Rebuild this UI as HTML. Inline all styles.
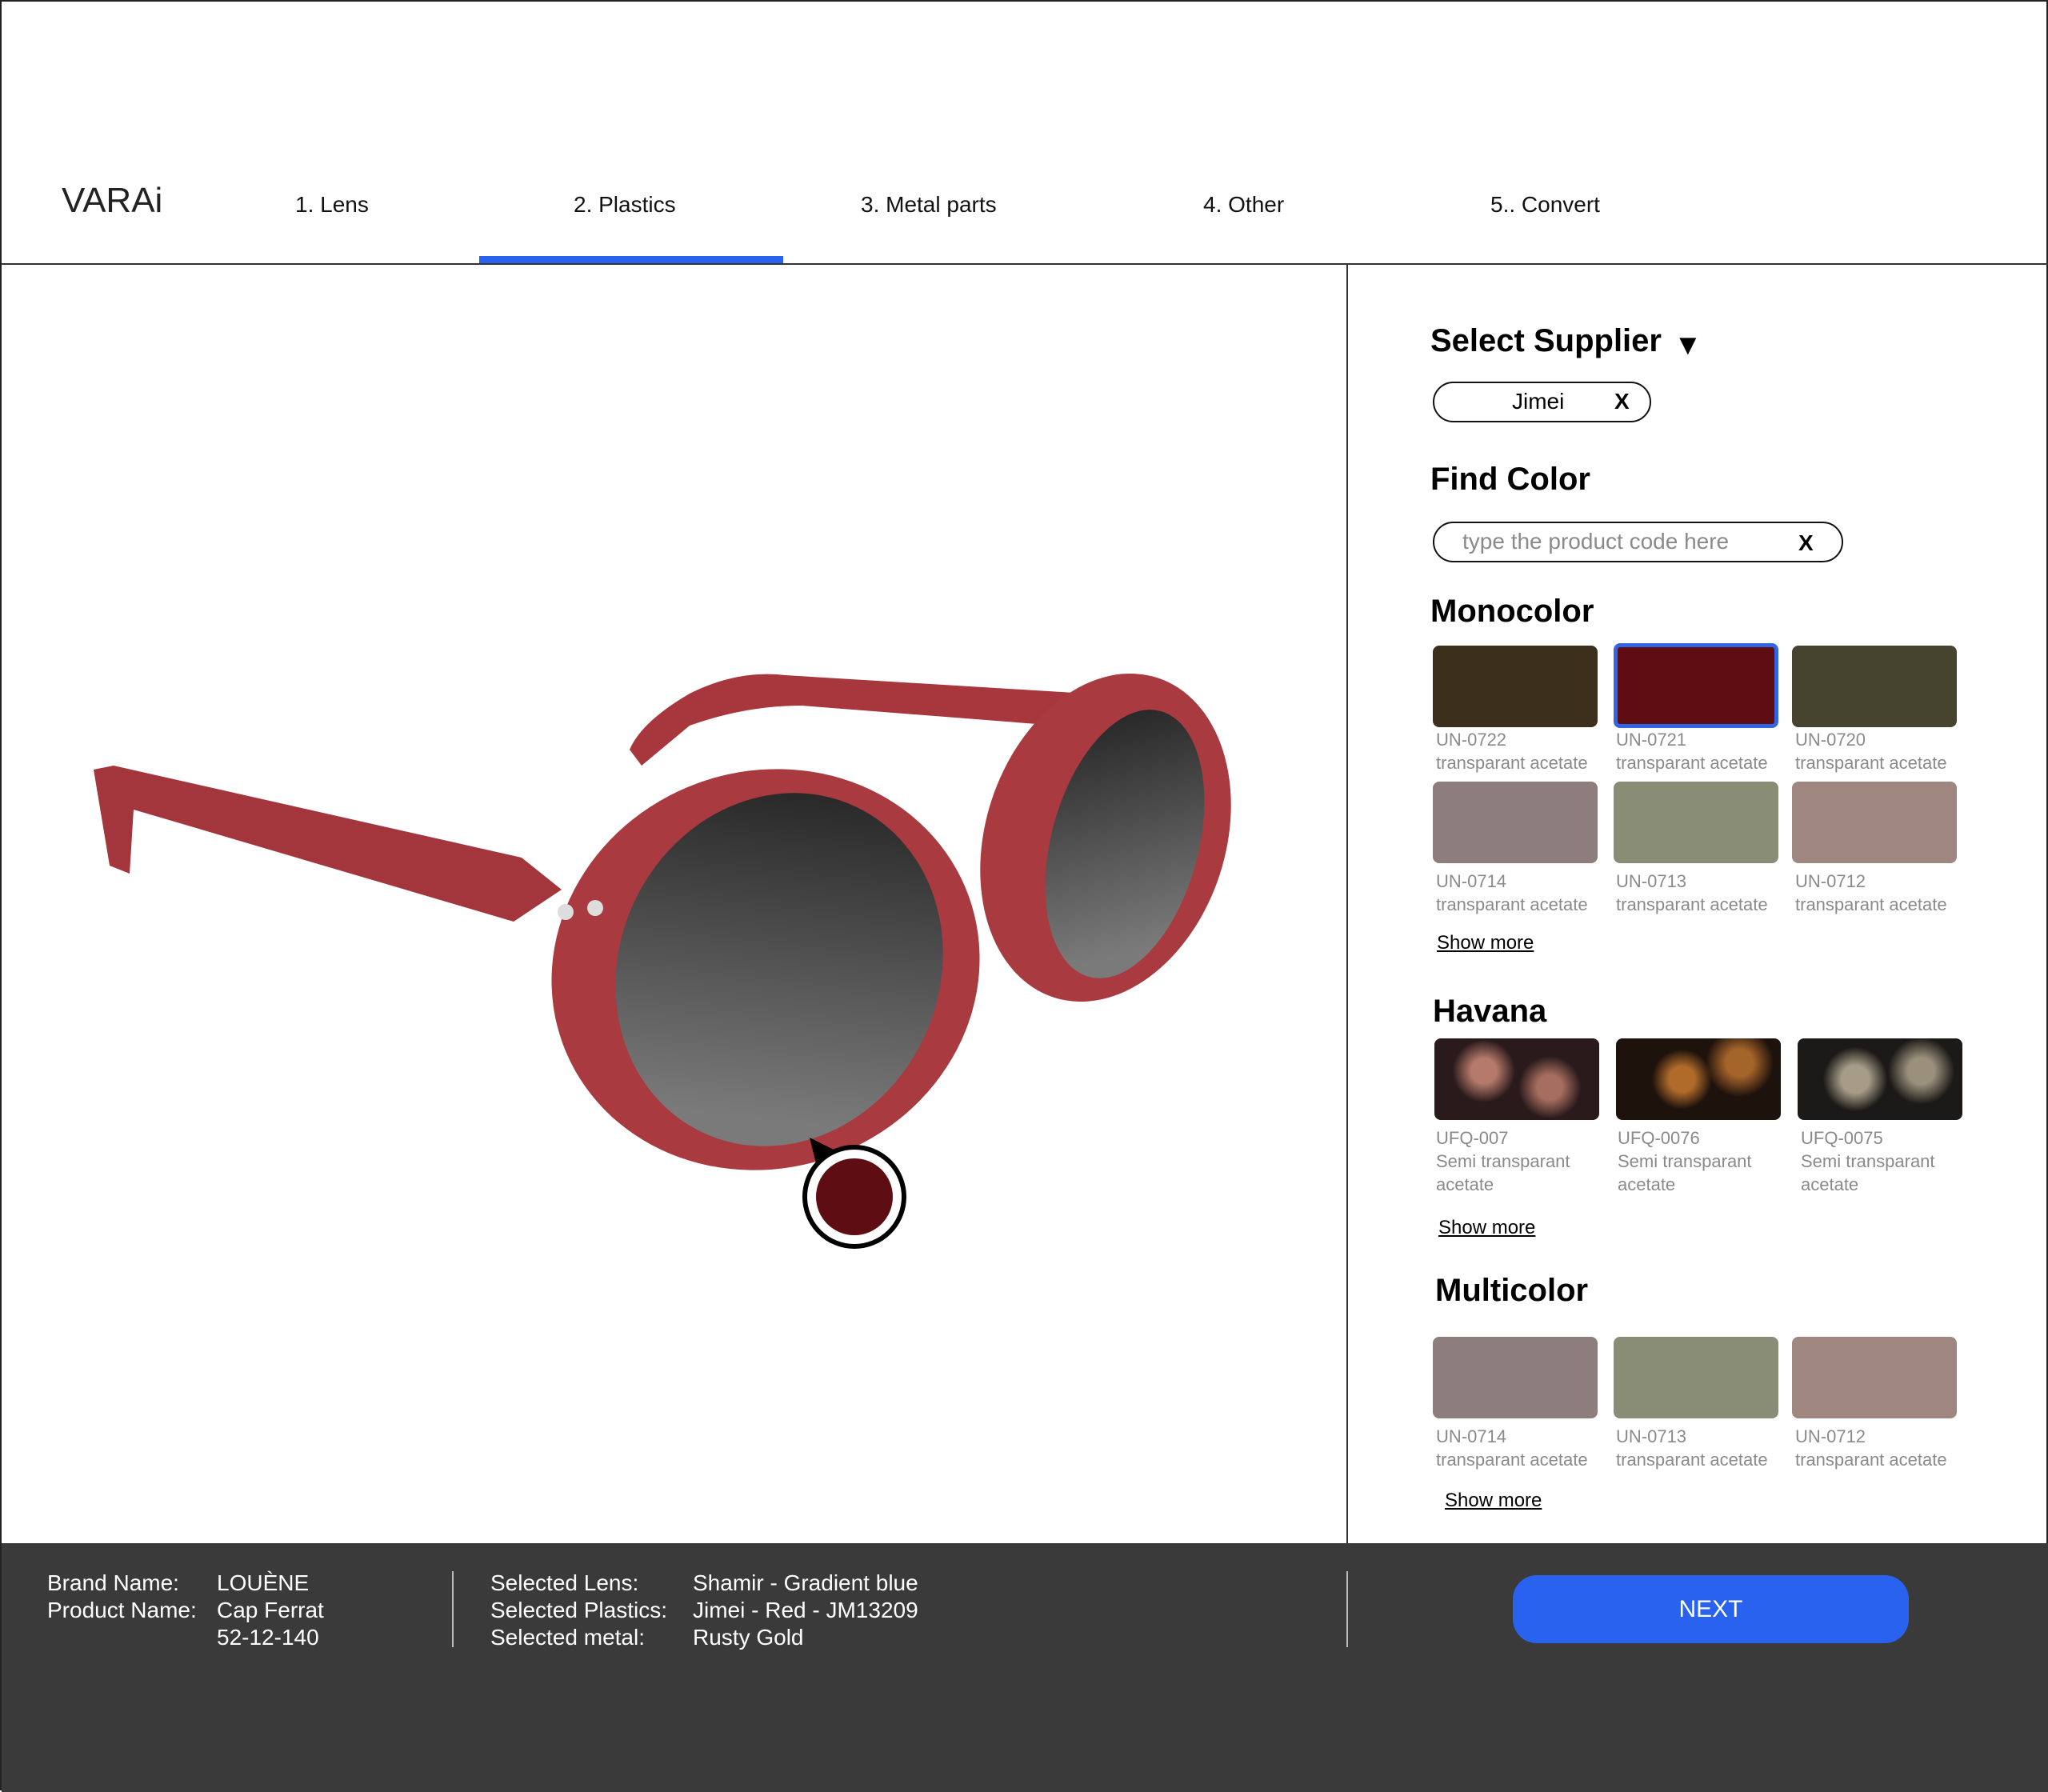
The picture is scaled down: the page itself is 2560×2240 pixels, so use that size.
<!DOCTYPE html><html><head><meta charset="utf-8"><style>
*{margin:0;padding:0;box-sizing:border-box}
body{width:2560px;height:2238px;position:relative;background:#fff;font-family:"Liberation Sans",sans-serif;overflow:hidden;border:2px solid #222}
.a{position:absolute;white-space:nowrap}
.nav{font-size:28px;color:#111;top:238px}
.h{font-weight:bold;font-size:40px;color:#000}
.sw{position:absolute;width:206px;height:102px;border-radius:8px}
.lb{position:absolute;font-size:22px;color:#8a8a8a;line-height:29px}
.sm{position:absolute;font-size:24px;color:#000;text-decoration:underline}
.bt{position:absolute;font-size:28px;color:#fff;line-height:34px}
</style></head><body>
<div class="a" style="left:75px;top:224px;font-size:44px;letter-spacing:0px;color:#222;font-weight:300">VARAi</div>
<div class="a nav" style="left:367px">1. Lens</div>
<div class="a nav" style="left:715px">2. Plastics</div>
<div class="a nav" style="left:1074px">3. Metal parts</div>
<div class="a nav" style="left:1502px">4. Other</div>
<div class="a nav" style="left:1861px">5.. Convert</div>
<div class="a" style="left:597px;top:318px;width:380px;height:10px;background:#2a62f0"></div>
<div class="a" style="left:0;top:327px;width:2560px;height:2px;background:#333"></div>
<div class="a" style="left:1681px;top:328px;width:2px;height:1600px;background:#333"></div>

<svg class="a" style="left:0;top:330px" width="1680" height="1597" viewBox="0 330 1680 1597">
<defs><linearGradient id="g" x1="0" y1="0" x2="0.3" y2="1"><stop offset="0" stop-color="#1e1e1e"/><stop offset="1" stop-color="#7a7a7a"/></linearGradient></defs>
<path d="M785 935 Q800 900 860 865 Q920 835 980 842 L1440 870 L1470 890 L1450 915 L1320 905 L1000 880 Q930 880 860 905 L800 955 Z" fill="#a8373d"/>
<ellipse cx="1380" cy="1045" rx="150" ry="210" transform="rotate(18 1380 1045)" fill="#a83a40"/>
<ellipse cx="1404" cy="1053" rx="92" ry="172" transform="rotate(15 1404 1053)" fill="url(#g)"/>
<path d="M115 960 L135 1080 L160 1090 L165 1010 L640 1150 L700 1110 L650 1070 L140 955 Z" fill="#a3363c"/>
<ellipse cx="955" cy="1210" rx="270" ry="248" transform="rotate(-20 955 1210)" fill="#a83a40"/>
<ellipse cx="972" cy="1210" rx="200" ry="225" transform="rotate(25 972 1210)" fill="url(#g)"/>
<circle cx="705" cy="1138" r="10" fill="#ddd"/><circle cx="742" cy="1133" r="10" fill="#ddd"/>
<path d="M1010 1420 L1020 1460 L1050 1440 Z" fill="#000"/>
<circle cx="1066" cy="1494" r="62" fill="#fff" stroke="#000" stroke-width="6"/>
<circle cx="1066" cy="1494" r="48" fill="#5e0e12"/>
</svg>

<div class="a h" style="left:1786px;top:402px">Select Supplier</div>
<div class="a" style="left:2090px;top:408px;font-size:36px">▼</div>
<div class="a" style="left:1789px;top:475px;width:273px;height:51px;border:2px solid #111;border-radius:26px"></div>
<div class="a" style="left:1888px;top:484px;font-size:28px">Jimei</div>
<div class="a" style="left:2016px;top:484px;font-size:28px;font-weight:bold">X</div>
<div class="a h" style="left:1786px;top:575px">Find Color</div>
<div class="a" style="left:1789px;top:650px;width:513px;height:51px;border:2px solid #111;border-radius:26px"></div>
<div class="a" style="left:1826px;top:659px;font-size:28px;color:#8a8a8a">type the product code here</div>
<div class="a" style="left:2246px;top:661px;font-size:28px;font-weight:bold">X</div>
<div class="a h" style="left:1786px;top:740px">Monocolor</div>

<div class="sw" style="left:1789px;top:805px;background:#3c2f1b"></div>
<div class="sw" style="left:2015px;top:802px;background:#5f0d12;border:5px solid #3264e6;height:106px"></div>
<div class="sw" style="left:2238px;top:805px;background:#46442f"></div>
<div class="lb" style="left:1793px;top:908px">UN-0722<br>transparant acetate</div>
<div class="lb" style="left:2018px;top:908px">UN-0721<br>transparant acetate</div>
<div class="lb" style="left:2242px;top:908px">UN-0720<br>transparant acetate</div>
<div class="sw" style="left:1789px;top:975px;background:#8d7d7c"></div>
<div class="sw" style="left:2015px;top:975px;background:#8a8d76"></div>
<div class="sw" style="left:2238px;top:975px;background:#9f8780"></div>
<div class="lb" style="left:1793px;top:1085px">UN-0714<br>transparant acetate</div>
<div class="lb" style="left:2018px;top:1085px">UN-0713<br>transparant acetate</div>
<div class="lb" style="left:2242px;top:1085px">UN-0712<br>transparant acetate</div>
<div class="sm" style="left:1794px;top:1163px">Show more</div>

<div class="a h" style="left:1789px;top:1240px">Havana</div>
<div class="sw" style="left:1791px;top:1296px;background:radial-gradient(circle at 30% 40%,#b57a6a 10%,transparent 25%),radial-gradient(circle at 70% 60%,#a66e5e 10%,transparent 25%),#2a1a1c"></div>
<div class="sw" style="left:2018px;top:1296px;background:radial-gradient(circle at 40% 50%,#b06a2a 12%,transparent 28%),radial-gradient(circle at 75% 30%,#a5642a 10%,transparent 25%),#1e120c"></div>
<div class="sw" style="left:2245px;top:1296px;background:radial-gradient(circle at 35% 50%,#a69c88 12%,transparent 28%),radial-gradient(circle at 75% 40%,#9a907c 10%,transparent 25%),#1c1a18"></div>
<div class="lb" style="left:1793px;top:1406px">UFQ-007<br>Semi transparant<br>acetate</div>
<div class="lb" style="left:2020px;top:1406px">UFQ-0076<br>Semi transparant<br>acetate</div>
<div class="lb" style="left:2249px;top:1406px">UFQ-0075<br>Semi transparant<br>acetate</div>
<div class="sm" style="left:1796px;top:1519px">Show more</div>

<div class="a h" style="left:1792px;top:1589px">Multicolor</div>
<div class="sw" style="left:1789px;top:1669px;background:#8d7d7c"></div>
<div class="sw" style="left:2015px;top:1669px;background:#8a8d76"></div>
<div class="sw" style="left:2238px;top:1669px;background:#9f8780"></div>
<div class="lb" style="left:1793px;top:1779px">UN-0714<br>transparant acetate</div>
<div class="lb" style="left:2018px;top:1779px">UN-0713<br>transparant acetate</div>
<div class="lb" style="left:2242px;top:1779px">UN-0712<br>transparant acetate</div>
<div class="sm" style="left:1804px;top:1860px">Show more</div>

<div class="a" style="left:0;top:1927px;width:2560px;height:311px;background:#3a3a3a"></div>
<div class="bt" style="left:57px;top:1960px">Brand Name:<br>Product Name:</div>
<div class="bt" style="left:269px;top:1960px">LOUÈNE<br>Cap Ferrat<br>52-12-140</div>
<div class="a" style="left:563px;top:1962px;width:2px;height:95px;background:#bbb"></div>
<div class="bt" style="left:611px;top:1960px">Selected Lens:<br>Selected Plastics:<br>Selected metal:</div>
<div class="bt" style="left:864px;top:1960px">Shamir - Gradient blue<br>Jimei - Red - JM13209<br>Rusty Gold</div>
<div class="a" style="left:1681px;top:1962px;width:2px;height:95px;background:#bbb"></div>
<div class="a" style="left:1889px;top:1967px;width:495px;height:85px;background:#2a62f0;border-radius:30px;color:#fff;font-size:30px;text-align:center;line-height:85px">NEXT</div>
</body></html>
